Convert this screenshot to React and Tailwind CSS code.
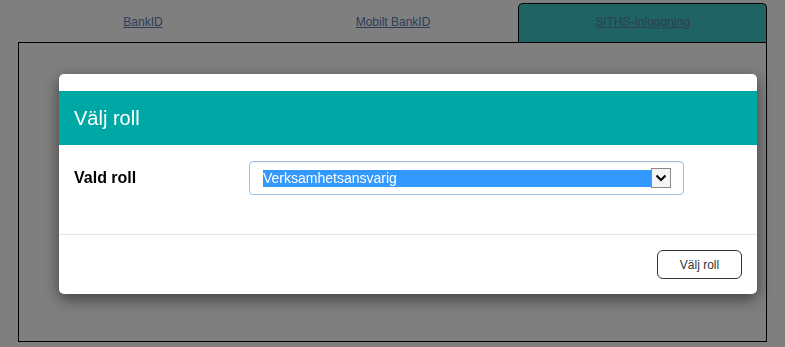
import React from "react";

export default function App() {
  return (
    <div className="relative h-[347px] w-[785px] overflow-hidden bg-white font-['Liberation_Sans',Arial,sans-serif]">
      <div className="px-[18px] pt-[3px]">
        <div className="grid grid-cols-[250px_250px_249px] h-[39px]">
          <div className="flex items-center justify-center pb-[2px]">
            <a href="#" className="text-[12px] text-[#5a7cae] underline">BankID</a>
          </div>
          <div className="flex items-center justify-center pb-[2px]">
            <a href="#" className="text-[12px] text-[#5a7cae] underline">Mobilt BankID</a>
          </div>
          <div className="flex items-center justify-center pb-[2px] bg-[#3ec6c6] border border-black border-b-0 rounded-t-[5px]">
            <a href="#" className="text-[12px] text-[#5a7cae] underline">SITHS-Inloggning</a>
          </div>
        </div>
        <div className="h-[300px] border border-black"></div>
      </div>

      <div className="fixed inset-0 bg-black/50 pl-[59px] pt-[74px]">
        <div className="w-[698px] h-[220px] bg-white rounded-[5px] shadow-[0_5px_15px_rgba(0,0,0,0.5)] pt-[17px] flex flex-col">
          <div className="h-[54px] bg-[#00a8a5] flex items-center px-[15px]">
            <h2 className="text-[20px] text-white">Välj roll</h2>
          </div>
          <div className="h-[90px] border-b border-[#e5e5e5] px-[15px] pt-[16px]">
            <div className="flex items-center">
              <div className="w-[175px] text-[16px] font-bold text-black">Vald roll</div>
              <div className="w-[435px] h-[34px] border border-[#9cc0e0] rounded-[4px] shadow-[inset_0_1px_1px_rgba(0,0,0,0.06)] flex items-center pl-[13px] pr-[12px]">
                <div className="flex-1 h-[17px] bg-[#3399ff] text-white text-[14px] leading-[17px]">Verksamhetsansvarig</div>
                <div className="w-[20px] h-[20px] border border-[#8a8a8a] bg-[#f4f4f4] flex items-center justify-center">
                  <svg width="12" height="8" viewBox="0 0 12 8">
                    <path d="M1.5 1.5 L6 6 L10.5 1.5" fill="none" stroke="#000" strokeWidth="2" />
                  </svg>
                </div>
              </div>
            </div>
          </div>
          <div className="flex-1 flex justify-end items-start pt-[15px] pr-[15px]">
            <button className="w-[85px] h-[29px] border border-[#333] rounded-[6px] bg-white text-[12px] text-[#333]">Välj roll</button>
          </div>
        </div>
      </div>
    </div>
  );
}
